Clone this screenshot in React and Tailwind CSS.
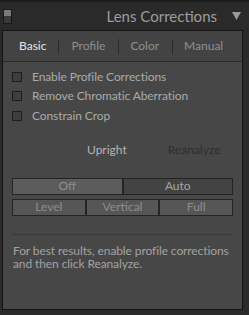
import React from 'react';

const font = { fontFamily: 'Lato, "Noto Sans", sans-serif' };

const Check = ({ label }) => (
  <div className="flex items-center h-[19.5px]">
    <span className="ml-[9px] w-[10px] h-[10px] border border-[#1e1e1e] bg-[#3e3e3e]" />
    <span className="ml-[10px] text-[12px] tracking-[-0.1px] text-[#a9a9a9]">{label}</span>
  </div>
);

const Btn = ({ children, className = '' }) => (
  <div
    className={`flex-1 flex items-center justify-center h-[17px] border border-[#242424] text-[12px] text-[#8e8e8e] ${className}`}
  >
    {children}
  </div>
);

export default function App() {
  return (
    <div className="w-[249px] h-[315px] bg-[#2a2a2a] flex flex-col" style={font}>
      {/* Header */}
      <div className="h-[30px] flex items-center border-t-[2px] border-[#1c1c1c] pr-[8px]">
        <div className="ml-[3px] w-[9px] h-[15px] flex flex-col border border-[#1a1a1a]">
          <span className="flex-1 bg-[#7a7a7a]" />
          <span className="flex-1 bg-[#3a3a3a]" />
        </div>
        <span className="ml-auto text-[15px] text-[#9c9c9c]">Lens Corrections</span>
        <svg className="ml-[15px]" width="9" height="8" viewBox="0 0 9 8">
          <path d="M0 0 H9 L4.5 8 Z" fill="#9a9a9a" />
        </svg>
      </div>

      {/* Panel */}
      <div className="ml-[2px] mr-[6px] h-[280px] border border-[#141414] bg-[#474747] flex flex-col">
        {/* Tabs */}
        <div className="h-[31px] flex items-center bg-[#434343] border-b border-[#2a2a2a] text-[12px]">
          <span className="ml-[16px] text-[#e6e6e6]">Basic</span>
          <span className="ml-[12px] w-px h-[15px] bg-[#2c2c2c]" />
          <span className="ml-[12px] text-[#8f8f8f]">Profile</span>
          <span className="ml-[13px] w-px h-[15px] bg-[#2c2c2c]" />
          <span className="ml-[11px] text-[#8f8f8f]">Color</span>
          <span className="ml-[13px] w-px h-[15px] bg-[#2c2c2c]" />
          <span className="ml-[11px] text-[#8f8f8f]">Manual</span>
        </div>

        <div className="pt-[5px] flex flex-col">
          <Check label="Enable Profile Corrections" />
          <Check label="Remove Chromatic Aberration" />
          <Check label="Constrain Crop" />
        </div>

        {/* Upright */}
        <div className="mt-[13px] h-[22px] flex items-center text-[12px]">
          <span className="ml-[84px] text-[#b4b4b4]">Upright</span>
          <span className="ml-[41px] text-[#2e2e2e]">Reanalyze</span>
        </div>

        <div className="mt-[17px] mx-[9px] flex flex-col gap-[4px]">
          <div className="flex">
            <Btn className="bg-[#5c5c5c]">Off</Btn>
            <Btn className="bg-[#434343] text-[#a4a4a4]">Auto</Btn>
          </div>
          <div className="flex">
            <Btn className="bg-[#565656]">Level</Btn>
            <Btn className="bg-[#565656]">Vertical</Btn>
            <Btn className="bg-[#565656]">Full</Btn>
          </div>
        </div>

        <div className="mt-[18px] mx-[9px] h-px bg-[#3a3a3a]" />
        <p className="mt-[9px] mx-[10px] text-[12px] leading-[13px] tracking-[-0.1px] text-[#a2a2a2]">
          For best results, enable profile corrections and then click Reanalyze.
        </p>
      </div>
    </div>
  );
}
